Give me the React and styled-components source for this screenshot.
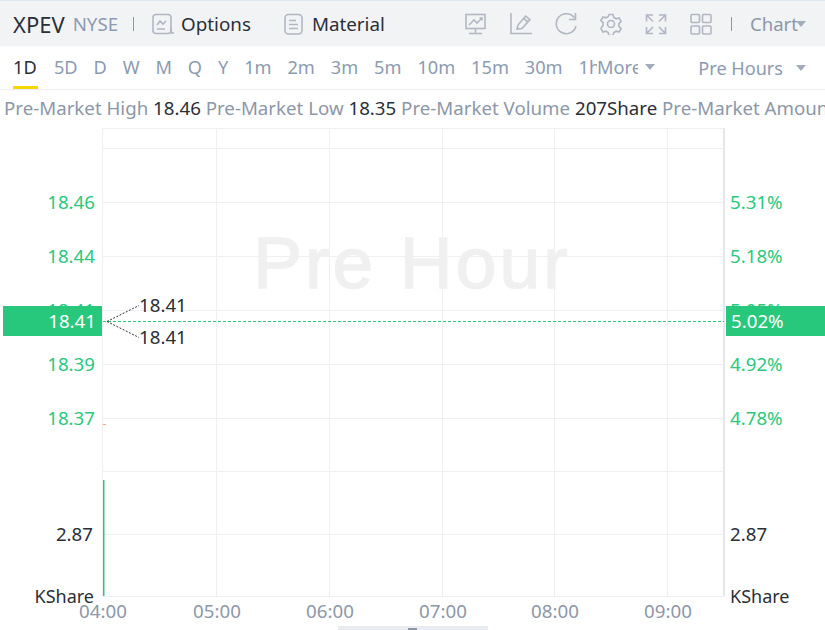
import React from "react"
import styled, { createGlobalStyle } from "styled-components"

const GlobalStyle = createGlobalStyle`
  html, body {
    margin: 0;
    padding: 0;
    background: #fff;
  }
  body {
    font-family: "Noto Sans", "Liberation Sans", sans-serif;
    overflow: hidden;
  }
`

const Page = styled.div`
  width: 825px;
  height: 630px;
  overflow: hidden;
  display: flex;
  flex-direction: column;
`

const TopBar = styled.header`
  height: 45px;
  flex: none;
  display: flex;
  align-items: center;
  background: #f2f3f5;
  border-top: 1px solid #dde6f3;
  padding: 0 19px 0 13px;
`

const Symbol = styled.span`
  font-size: 22px;
  color: #2b2f36;
  margin-right: 8px;
`

const Exchange = styled.span`
  font-size: 18.7px;
  color: #8c9bb0;
`

const Sep = styled.i`
  width: 1px;
  height: 14px;
  background: #8e97a5;
  margin: ${props => props.margin};
`

const MenuItem = styled.span`
  display: flex;
  align-items: center;
  font-size: 18.8px;
  color: #2b2f36;
  gap: ${props => props.$gap}px;
  margin-right: 33px;
`

const Tools = styled.div`
  margin-left: auto;
  display: flex;
  align-items: center;
  gap: 23px;
`

const ChartMenu = styled.span`
  display: flex;
  align-items: center;
  font-size: 18.6px;
  color: #8c97a8;
`

const Caret = styled.i`
  width: 0;
  height: 0;
  border-left: 5px solid transparent;
  border-right: 5px solid transparent;
  border-top: 6px solid #a3acba;
  margin-left: ${props => props.$gap || 0}px;
`

const TabBar = styled.nav`
  height: 44px;
  flex: none;
  display: flex;
  box-sizing: border-box;
  border-bottom: 1px solid #eceef1;
  padding: 0 19px 0 13px;
`

const TabList = styled.div`
  width: 584px;
  flex: none;
  overflow: hidden;
  display: flex;
  gap: 15.9px;
`

const Tab = styled.span`
  height: 43px;
  min-width: ${props => (props.$active ? "25px" : "0")};
  box-sizing: border-box;
  flex: none;
  font-size: 18.2px;
  line-height: 42px;
  color: ${props => (props.$active ? "#2b2f36" : "#8c9bb0")};
  border-bottom: 3px solid ${props => (props.$active ? "#f5d800" : "transparent")};
`

const More = styled.span`
  width: 41px;
  overflow: hidden;
  flex: none;
  font-size: 18.2px;
  line-height: 42px;
  color: #8c9bb0;
  margin-right: 7px;
`

const CaretBox = styled.span`
  display: flex;
  align-items: center;
  height: 42px;
`

const Session = styled.span`
  margin-left: auto;
  display: flex;
  align-items: center;
  font-size: 18.1px;
  line-height: 42px;
  color: #8c9bb0;
`

const StatRow = styled.div`
  height: 38px;
  flex: none;
  padding-left: 4px;
  font-size: 18.7px;
  line-height: 36px;
  white-space: nowrap;
  overflow: hidden;
  color: #8c97a8;
`

const StatValue = styled.span`
  color: #2b2f36;
`

const ChartSvg = styled.svg`
  display: block;
  flex: none;
  font-family: "Noto Sans", "Liberation Sans", sans-serif;
  font-size: 18.7px;
`

const IconSvg = styled.svg`
  display: block;
  flex: none;
  fill: none;
  stroke: #b2b7c4;
  stroke-width: 1.6;
`

const Icon = ({ w = 22, h = 22, children }) => (
  <IconSvg width={w} height={h} viewBox={`0 0 ${w} ${h}`}>
    {children}
  </IconSvg>
)

const tabs = ["1D", "5D", "D", "W", "M", "Q", "Y", "1m", "2m", "3m", "5m", "10m", "15m", "30m", "1h"]

const GREEN = "#2ac97d"
const GRID = "#eeeff2"
// chart origin is y=128 in the page
const hLines = [20, 74, 128, 182, 236, 290, 343, 406, 468]
const vLines = [0, 114, 227, 340, 452, 565, 622]
const priceLabels = [
  { y: 74, left: "18.46", right: "5.31%" },
  { y: 128, left: "18.44", right: "5.18%" },
  { y: 182, left: "18.41", right: "5.05%" },
  { y: 236, left: "18.39", right: "4.92%" },
  { y: 290, left: "18.37", right: "4.78%" }
]
const times = ["04:00", "05:00", "06:00", "07:00", "08:00", "09:00"]

const Chart = () => (
  <ChartSvg width="825" height="502" viewBox="0 0 825 502">
    <g transform="translate(102.5 0.5)">
      <rect x="0" y="0" width="622" height="468" fill="none" stroke={GRID} />
      {hLines.map(y => (
        <line key={y} x1="0" x2="622" y1={y} y2={y} stroke={GRID} />
      ))}
      {vLines.map(x => (
        <line key={x} x1={x} x2={x} y1="0" y2="468" stroke={GRID} />
      ))}
    </g>
    <line x1="724" x2="724" y1="0" y2="468" stroke="#e6e7ea" strokeWidth="2" />

    <text
      x="412"
      y="159.5"
      fontSize="73"
      letterSpacing="3.2"
      fill="#f0f0f1"
      stroke="#f0f0f1"
      strokeWidth="1.5"
      textAnchor="middle"
      fontFamily="Liberation Sans, sans-serif"
    >
      Pre Hour
    </text>

    {priceLabels.map(p => (
      <g key={p.y} fill={GREEN}>
        <text x="95" y={p.y + 7} textAnchor="end">{p.left}</text>
        <text x="730" y={p.y + 7}>{p.right}</text>
      </g>
    ))}

    <rect x="3" y="178" width="99" height="30" fill="#28c87c" />
    <rect x="726" y="178" width="99" height="30" fill="#28c87c" />
    <text x="96" y="200" textAnchor="end" fill="#fff">18.41</text>
    <text x="731" y="200" fill="#fff">5.02%</text>
    <line x1="103" x2="724" y1="193.5" y2="193.5" stroke={GREEN} strokeDasharray="3 2" />

    <path d="M107 193.500 L139 177.500 M107 193.500 L139 209.500" stroke="#333" strokeDasharray="2 1.500" fill="none" />
    <text x="139" y="184" fill="#2b2f36">18.41</text>
    <text x="139" y="216" fill="#2b2f36">18.41</text>

    <rect x="103" y="296" width="3" height="1" fill="#f3a77b" />
    <rect x="103" y="352" width="1.500" height="116" fill="#2ac97d" />

    <text x="93" y="413" textAnchor="end" fill="#2b2f36">2.87</text>
    <text x="730" y="413" fill="#2b2f36">2.87</text>
    <text x="94" y="475" textAnchor="end" fontSize="18" fill="#2b2f36">KShare</text>
    <text x="730" y="475" fontSize="18" fill="#2b2f36">KShare</text>

    {times.map((t, i) => (
      <text key={t} x={vLines[i] + 103} y="490" textAnchor="middle" fill="#8c97a8">{t}</text>
    ))}

    <rect x="338" y="498" width="150" height="4" fill="#e9ecf0" />
    <rect x="408" y="500" width="9" height="2" fill="#8c97a8" />
  </ChartSvg>
)

const App = () => (
  <Page>
    <GlobalStyle />
    <TopBar>
      <Symbol>XPEV</Symbol>
      <Exchange>NYSE</Exchange>
      <Sep margin="0 18px 0 15px" />
      <MenuItem $gap={6}>
        <Icon w={23} h={22}>
          <rect x="1" y="1.500" width="18" height="19" rx="3" />
          <path d="M5 12l3-4 3 3 3-3M5 16h8M19 14.500v3a2.500 2.500 0 0 0 3 2.500h-3" />
        </Icon>
        Options
      </MenuItem>
      <MenuItem $gap={9}>
        <Icon w={19} h={22}>
          <rect x="1" y="1.500" width="17" height="19.500" rx="3.500" />
          <path d="M5 7.500h7M5 11.500h9M5 15.500h9" />
        </Icon>
        Material
      </MenuItem>
      <Tools>
        <Icon>
          <rect x="1" y="1.500" width="19" height="14" />
          <path d="M4 12l5-5 3 3 5-5M14.500 5H17v2.500M10.500 15.500v5M4 20.500h13" />
        </Icon>
        <Icon>
          <path d="M1 0v20.500H22" />
          <path d="M7 16l1-4 7.500-9 4.500 3.500-8 9z" />
          <path d="M13.500 5.500l4.500 3.500" />
        </Icon>
        <Icon>
          <path d="M19.500 5A10 10 0 1 0 21 13" />
          <path d="M20.500 0v6.500h-6.500" />
        </Icon>
        <Icon>
          <path d="M9 1.500h4l.8 3 2.300 1.300 3-.8 2 3.500-2.200 2.200v2.600l2.200 2.200-2 3.500-3-.8-2.300 1.300-.8 3H9l-.8-3-2.300-1.300-3 .8-2-3.500L3.100 12.300V9.700L.9 7.500l2-3.500 3 .8L8.200 3.500z" />
          <circle cx="11" cy="11" r="3.500" />
        </Icon>
        <Icon>
          <path d="M8 2H1.500v6.500M1.500 2l6.500 6.500M14 2h6.500v6.500M20.500 2L14 8.500M8 20.500H1.500V14M1.500 20.500L8 14M14 20.500h6.500V14M20.500 20.500L14 14" />
        </Icon>
        <Icon>
          <rect x="1" y="1.500" width="8.500" height="8" rx="1" />
          <rect x="12.500" y="1.500" width="8.500" height="8" rx="1" />
          <rect x="1" y="13" width="8.500" height="8" rx="1" />
          <rect x="12.500" y="13" width="8.500" height="8" rx="1" />
        </Icon>
        <Sep margin="0 -5px 0 -4px" />
        <ChartMenu>
          Chart
          <Caret $gap={-2} />
        </ChartMenu>
      </Tools>
    </TopBar>
    <TabBar>
      <TabList>
        {tabs.map((t, i) => (
          <Tab key={t} $active={i === 0}>{t}</Tab>
        ))}
      </TabList>
      <More>More</More>
      <CaretBox>
        <Caret />
      </CaretBox>
      <Session>
        Pre Hours
        <Caret $gap={13} />
      </Session>
    </TabBar>
    <StatRow>
      Pre-Market High <StatValue>18.46</StatValue> Pre-Market Low <StatValue>18.35</StatValue> Pre-Market Volume{" "}
      <StatValue>207Share</StatValue> Pre-Market Amount
    </StatRow>
    <Chart />
  </Page>
)

export default App
